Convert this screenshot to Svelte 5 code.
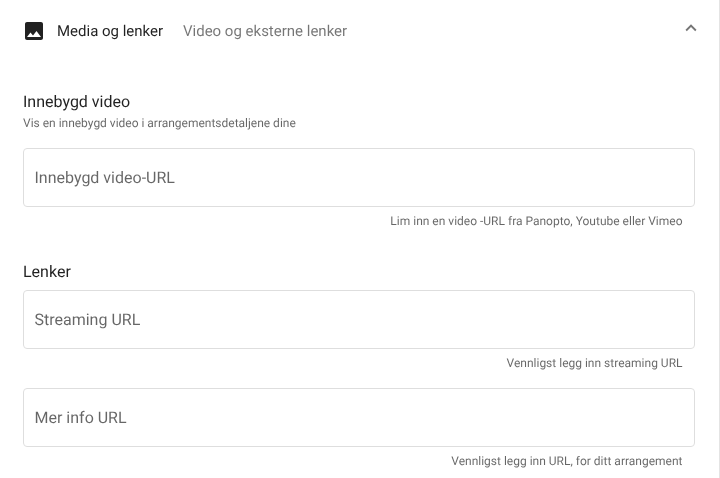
<script>
  const groups = [
    { id: 'embed', label: 'Innebygd video-URL', hint: 'Lim inn en video -URL fra Panopto, Youtube eller Vimeo' },
  ];
  const links = [
    { id: 'stream', label: 'Streaming URL', hint: 'Vennligst legg inn streaming URL' },
    { id: 'info', label: 'Mer info URL', hint: 'Vennligst legg inn URL, for ditt arrangement' },
  ];
</script>

<div class="panel">
  <header class="head">
    <svg class="img" viewBox="0 0 24 24" width="24" height="24"><path d="M21 19V5c0-1.100-.9-2-2-2H5c-1.100 0-2 .9-2 2v14c0 1.100.9 2 2 2h14c1.100 0 2-.9 2-2zM8.500 13.500l2.500 3.010L14.500 12l4.500 6H5l3.500-4.500z"/></svg>
    <span class="title">Media og lenker</span>
    <span class="sub">Video og eksterne lenker</span>
    <svg class="chev" viewBox="0 0 24 24" width="22" height="22"><path d="M12 8l-6 6 1.410 1.410L12 10.830l4.590 4.580L18 14z"/></svg>
  </header>

  <section class="body">
    <h3 class="h first">Innebygd video</h3>
    <p class="desc">Vis en innebygd video i arrangementsdetaljene dine</p>
    {#each groups as f}
      <div class="field">
        <input id={f.id} class="box" placeholder={f.label} aria-label={f.label} />
        <div class="hint">{f.hint}</div>
      </div>
    {/each}

    <h3 class="h second">Lenker</h3>
    {#each links as f}
      <div class="field">
        <input id={f.id} class="box" placeholder={f.label} aria-label={f.label} />
        <div class="hint">{f.hint}</div>
      </div>
    {/each}
  </section>
</div>

<style>
  :global(body) { margin: 0; background: #fff; font-family: Roboto, "Liberation Sans", sans-serif; overflow: hidden; }
  .panel { width: 720px; height: 478px; box-sizing: border-box; border-right: 1px solid #e4e4e4; overflow: hidden; text-rendering: geometricPrecision; will-change: transform; }
  .head { display: flex; align-items: center; height: 62px; padding: 0 17px 0 22.400px; box-sizing: border-box; }
  .img { fill: rgba(0,0,0,.87); flex: none; }
  .title { margin-left: 10.600px; font-size: 15px; color: rgba(0,0,0,.87); width: 126px; flex: none; }
  .sub { font-size: 15px; color: rgba(0,0,0,.54); flex: 1; }
  .chev { fill: rgba(0,0,0,.54); flex: none; margin-top: -6px; }
  .body { padding: 0 24px 0 23px; }
  .h { margin: 0; font-size: 16px; font-weight: 400; line-height: 20px; color: rgba(0,0,0,.87); }
  .first { margin-top: 30px; }
  .second { margin-top: 16px; margin-bottom: 8px; }
  .desc { margin: 3px 0 17px; font-size: 12px; line-height: 16px; letter-spacing: -.01px; color: rgba(0,0,0,.6); }
  .field { margin-bottom: 0; }
  .box { display: block; width: 100%; height: 59px; box-sizing: border-box; border: 1px solid #dedede; border-radius: 4px; padding: 0 11px 0 10.500px; font: 400 16px Roboto, sans-serif; background: transparent; outline: none; text-rendering: geometricPrecision; }
  .box::placeholder { color: rgba(0,0,0,.6); opacity: 1; }
  .hint { height: 39px; padding: 6px 12.500px 0 0; box-sizing: border-box; text-align: right; font-size: 12px; line-height: 16px; color: rgba(0,0,0,.6); }
</style>
